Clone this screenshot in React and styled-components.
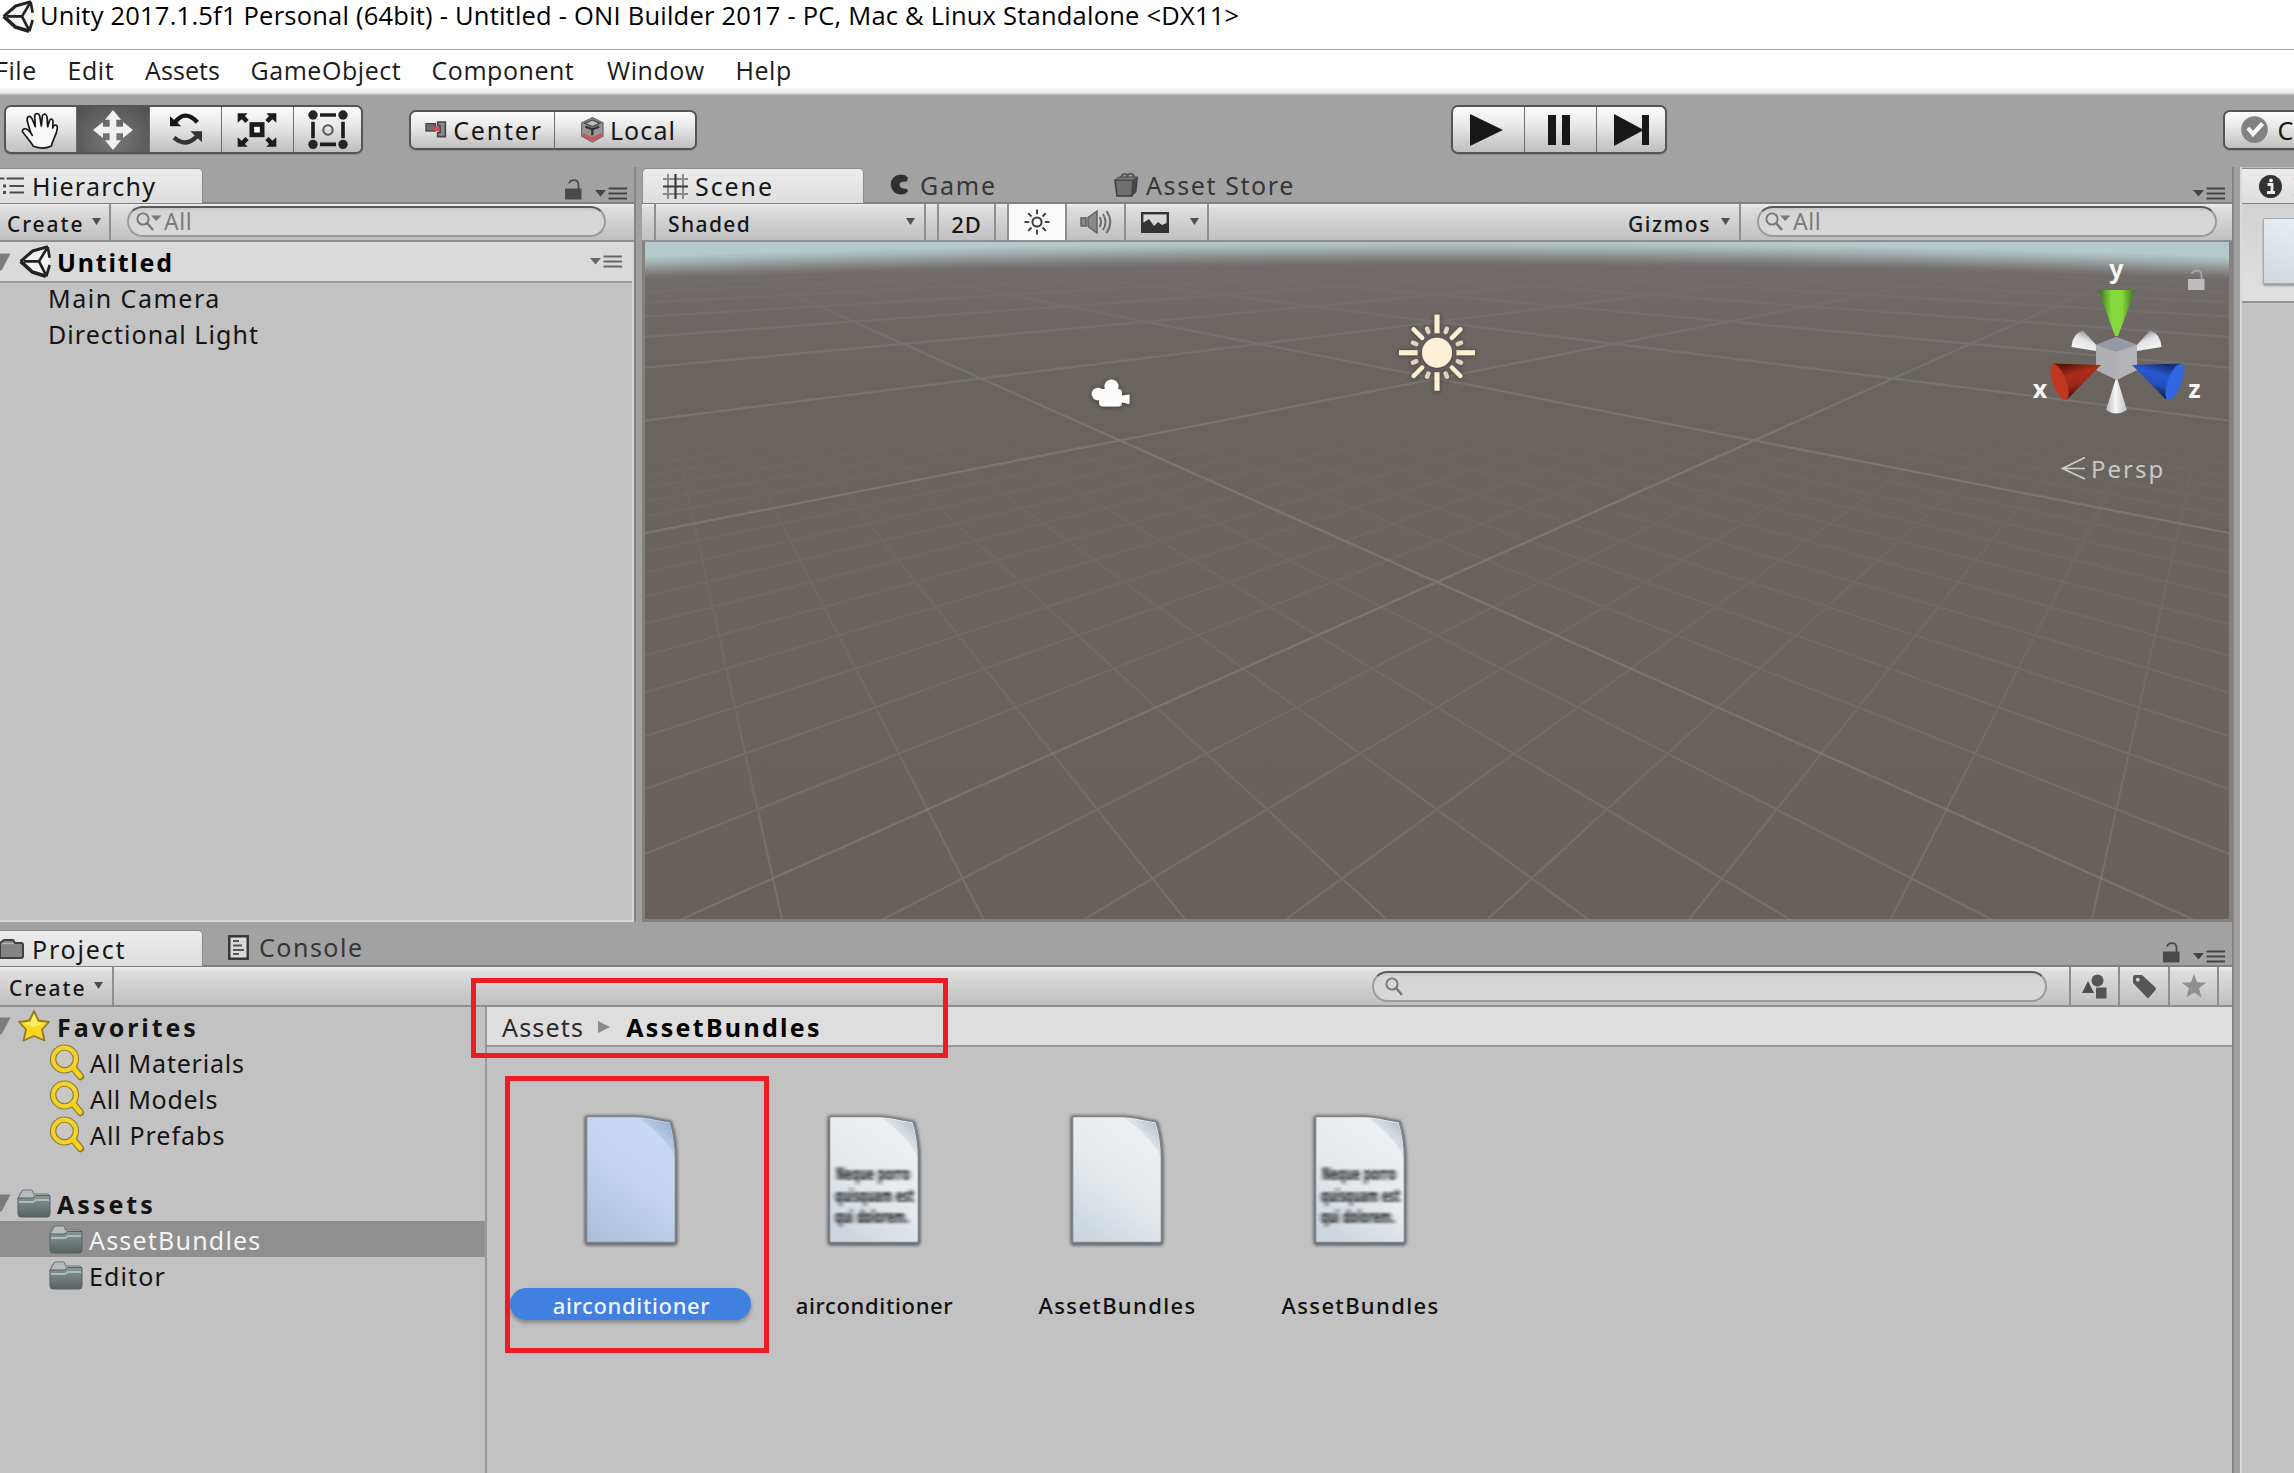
import React from 'react';
import styled, { createGlobalStyle, css } from 'styled-components';

const Global = createGlobalStyle`
  html, body { margin: 0; padding: 0; overflow: hidden; background: #a2a2a2; }
  * { box-sizing: border-box; }
  svg { display: block; flex: none; overflow: visible; }
`;

/* ---------- shared parts ---------- */

const Window = styled.div`
  position: relative;
  width: 2294px;
  height: 1473px;
  overflow: hidden;
  display: flex;
  flex-direction: column;
  background: #a2a2a2;
  font-family: 'Noto Sans', 'Open Sans', sans-serif;
  color: #161616;
`;

const Text = styled.span`
  flex: none;
  white-space: pre;
  font-size: ${(p) => p.$size || 25}px;
  font-weight: ${(p) => p.$weight || 400};
  letter-spacing: ${(p) => p.$track || 0}px;
  color: ${(p) => p.$color || 'inherit'};
`;

const Spacer = styled.div`
  flex: ${(p) => (p.$w ? 'none' : '1')};
  width: ${(p) => (p.$w ? `${p.$w}px` : 'auto')};
`;

const Column = styled.div`
  display: flex;
  flex-direction: column;
  flex: ${(p) => (p.$w ? 'none' : '1')};
  width: ${(p) => (p.$w ? `${p.$w}px` : 'auto')};
  min-width: 0;
`;

/* ---------- title and menu ---------- */

const TitleBar = styled.header`
  flex: none;
  display: flex;
  height: 50px;
  padding-left: 2px;
  gap: 6px;
  background: #fff;
  border-bottom: 1px solid #a9a9a9;
  font-family: 'Open Sans', 'Noto Sans', sans-serif;
  line-height: 30px;
  color: #000;
`;

const MenuBar = styled.nav`
  flex: none;
  display: grid;
  grid-template-columns: 72.5px 77.5px 105.5px 181px 175.5px 128.5px auto;
  height: 45px;
  background: linear-gradient(#fff 38px, #f0f0f0 39px, #ededed 43px, #bdbdbd 44px);
  font-family: 'Open Sans', 'Noto Sans', sans-serif;
  line-height: 41px;
  color: #1b1b1b;
  & > * { margin-left: -5px; }
`;

/* ---------- main toolbar ---------- */

const MainToolbar = styled.div`
  flex: none;
  display: flex;
  align-items: center;
  height: 72px;
  padding: 0 0 3px 4px;
`;

const ButtonGroup = styled.div`
  flex: none;
  display: flex;
  height: ${(p) => p.$h}px;
  border: 2px solid #545454;
  border-radius: 7px;
  overflow: hidden;
  box-shadow: 0 1px 1px rgba(0, 0, 0, 0.15);
`;

const GroupButton = styled.div`
  display: flex;
  align-items: center;
  justify-content: center;
  gap: ${(p) => p.$gap || 0}px;
  width: ${(p) => p.$w}px;
  padding-left: ${(p) => p.$pad || 0}px;
  padding-right: ${(p) => p.$end || 0}px;
  background: ${(p) =>
    p.$on
      ? 'radial-gradient(ellipse at 50% 70%, #7a7a7a, #4e4e4e)'
      : 'linear-gradient(#fbfbfb, #e9e9e9 40%, #c0bebe)'};
  & + & { border-left: 1.5px solid #6e6e6e; }
`;

/* ---------- docked panels ---------- */

const TabStrip = styled.div`
  flex: none;
  display: flex;
  height: ${(p) => p.$h || 37}px;
  align-items: flex-end;
  border-bottom: 2px solid #808080;
`;

const Tab = styled.div`
  display: flex;
  align-items: center;
  gap: ${(p) => p.$gap || 8}px;
  width: ${(p) => p.$w}px;
  height: 100%;
  padding-left: ${(p) => p.$pad || 0}px;
  color: ${(p) => (p.$active ? '#161616' : '#363636')};
  ${(p) =>
    p.$active &&
    css`
      background: linear-gradient(#ececec, #dedede);
      border: 1px solid #8c8c8c;
      border-left-width: ${p.$flush ? 0 : 1}px;
      border-bottom: 0;
      border-radius: ${p.$flush ? '0 5px 0 0' : '5px 5px 0 0'};
      margin-bottom: -1px;
    `}
`;

const StripTools = styled.div`
  display: flex;
  align-items: flex-end;
  gap: 13px;
  padding: 0 7px 2px 0;
`;

const Toolbar = styled.div`
  flex: none;
  display: flex;
  height: ${(p) => p.$h || 38}px;
  background: linear-gradient(#eeeeee, #dedede 12%, #c0c0c0);
  border-bottom: 2px solid #8e8e8e;
`;

const Cell = styled.div`
  flex: none;
  display: flex;
  align-items: center;
  gap: ${(p) => p.$gap || 0}px;
  width: ${(p) => p.$w}px;
  padding-left: ${(p) => p.$pad || 0}px;
  justify-content: ${(p) => (p.$center ? 'center' : 'flex-start')};
  border-right: 2px solid #8f8f8f;
  background: ${(p) => (p.$on ? '#fafafa' : 'transparent')};
  & > span { padding-top: 3px; }
`;

const SearchField = styled.div`
  flex: none;
  display: flex;
  align-items: center;
  width: ${(p) => p.$w}px;
  height: 31px;
  margin-top: ${(p) => p.$top || 2}px;
  padding: 0 0 1px ${(p) => p.$pad || 7}px;
  gap: 2px;
  border: 2px solid #9b9b9b;
  border-top-color: #5a5a5a;
  border-radius: 16px;
  background: linear-gradient(#c6c6c6, #d6d6d6 15%, #d8d8d8);
`;

const HierarchyBody = styled.div`
  flex: 1;
  background: #c2c2c2;
  border-right: 2px solid #d8d8d8;
  border-bottom: 2px solid #d8d8d8;
`;

const SceneHeading = styled.div`
  display: flex;
  align-items: center;
  height: 41px;
  background: #dadada;
  border-bottom: 2px solid #9a9a9a;
  padding-right: 10px;
`;

const Item = styled.div`
  display: flex;
  align-items: center;
  height: 36px;
  padding-left: ${(p) => p.$indent}px;
  gap: ${(p) => p.$gap || 0}px;
  margin-top: ${(p) => p.$above || 0}px;
  background: ${(p) => (p.$selected ? '#8f8f8f' : 'transparent')};
  color: ${(p) => (p.$selected ? '#f4f4f4' : '#141414')};
  & > span { padding-top: ${(p) => p.$drop || 0}px; }
`;

const Viewport = styled.div`
  flex: 1;
  border: 3px solid #85817c;
  border-top: 0;
  overflow: hidden;
`;

const VGutter = styled.div`
  flex: none;
  width: ${(p) => p.$w}px;
  background: #a0a0a0;
  border-left: 2px solid #858585;
`;

const Inspector = styled.aside`
  flex: 1;
  display: flex;
  flex-direction: column;
  min-width: 0;
  overflow: hidden;
  background: #c2c2c2;
  border-left: 2px solid #dadada;
`;

const InspectorHead = styled.div`
  flex: none;
  height: 99px;
  padding: 14px 0 0 21px;
  background: linear-gradient(#d2d2d2, #e0e0e0);
  border-bottom: 2px solid #939393;
`;

const PreviewSheet = styled.div`
  width: 60px;
  height: 66px;
  border: 1.5px solid #a3a8ac;
  border-radius: 2px;
  background: linear-gradient(200deg, #edf1f4, #cfd8e0);
  box-shadow: 0 2px 2px rgba(0, 0, 0, 0.3);
`;

const TopDock = styled.div`
  flex: none;
  display: flex;
  height: 755px;
  margin-bottom: 7px;
`;

const Workspace = styled.div`
  flex: 1;
  display: flex;
  min-height: 0;
`;

/* ---------- project ---------- */

const ProjectBody = styled.div`
  display: flex;
  flex: 1;
`;

const Tree = styled.div`
  flex: none;
  width: 487px;
  padding-top: 1px;
  background: #c2c2c2;
  border-right: 2px solid #989898;
`;

const Crumbs = styled.div`
  flex: none;
  display: flex;
  align-items: center;
  height: 40px;
  padding: 2px 0 0 15px;
  background: #dedede;
  border-bottom: 2px solid #9a9a9a;
`;

const Tiles = styled.div`
  flex: 1;
  display: grid;
  grid-template-columns: repeat(4, 243px);
  align-content: start;
  padding: 66px 0 0 22px;
  background: #c2c2c2;
`;

const Tile = styled.div`
  display: flex;
  flex-direction: column;
  align-items: center;
  gap: 43px;
`;

const TileLabel = styled.div`
  width: 241px;
  height: 32px;
  padding-left: 2px;
  line-height: 35px;
  text-align: center;
  border-radius: 16px;
  background: ${(p) => (p.$selected ? '#3f80e0' : 'transparent')};
  color: ${(p) => (p.$selected ? '#f2f6ff' : '#101010')};
  box-shadow: ${(p) => (p.$selected ? '0 3px 4px rgba(0,0,0,0.3)' : 'none')};
`;

const Highlight = styled.div`
  position: absolute;
  left: ${(p) => p.$x}px;
  top: ${(p) => p.$y}px;
  width: ${(p) => p.$w}px;
  height: ${(p) => p.$h}px;
  border: 5px solid #ed1c24;
  pointer-events: none;
`;

/* ---------- icons ---------- */

const UnityLogo = () => (
  <svg width="32" height="33" viewBox="57 462 96 99">
    <path d="M62 511 L98 480 L142 468 L150 511 L139 556 L97 543 Z" fill="#f4f4f4" />
    <g fill="none" stroke="#222" strokeLinejoin="round">
      <path d="M62 511 L98 480 L144 467" strokeWidth="9" />
      <path d="M62 511 L97 543 L138 556" strokeWidth="11" />
      <path d="M143 468 L149 500 M149 522 L139 556" strokeWidth="8" />
      <path d="M72 511 H117 M117 511 L140 473 M117 511 L137 550" strokeWidth="8" />
    </g>
  </svg>
);

const HandIcon = () => (
  <svg width="40" height="40" viewBox="60 58 120 120">
    <path
      d="M100 167 C90 150 76 136 67 122 C68 112 80 110 92 126 L82 92 C79 76 90 72 96 84 L106 108 L104 76 C106 66 116 66 119 76 L124 106 L127 76 C131 66 141 70 141 80 L143 108 L149 88 C155 82 160 86 159 96 L158 112 C162 100 172 100 172 112 C170 136 160 140 154 166 Q128 178 100 167 Z"
      fill="#f8f8f8" stroke="#161616" strokeWidth="5" strokeLinejoin="round"
    />
    <path d="M92 126 L98 136" stroke="#161616" strokeWidth="5" />
  </svg>
);

const MoveIcon = () => (
  <svg width="40" height="40" viewBox="278 57 120 120">
    <path
      d="M338 57 L362 86 H348 V107 H368 V93 L398 117 L368 141 V127 H348 V148 H362 L338 177 L314 148 H328 V127 H308 V141 L278 117 L308 93 V107 H328 V86 H314 Z"
      fill="#f1f1f1"
    />
  </svg>
);

const RotateIcon = () => (
  <svg width="40" height="40" viewBox="498 57 120 120">
    <g fill="none" stroke="#161616" strokeWidth="13">
      <path d="M525 94 Q555 54 592 94" />
      <path d="M592 134 Q560 172 522 140" stroke="#333" />
    </g>
    <path d="M510 76 V106 H544 Z" fill="#161616" />
    <path d="M571 121 H606 V154 Z" fill="#333" />
  </svg>
);

const ScaleIcon = () => (
  <svg width="40" height="40" viewBox="710 57 120 120">
    <rect x="754.5" y="100.5" width="31" height="31" fill="#fff" stroke="#1c1c1c" strokeWidth="14" />
    <path
      d="M712 67 H742 L734 75 L745 87 L735 96 L724 85 L712 95 Z M828 67 H798 L806 75 L795 87 L805 96 L816 85 L828 95 Z M712 167 H742 L734 159 L745 147 L735 138 L724 149 L712 139 Z M828 167 H798 L806 159 L795 147 L805 138 L816 149 L828 139 Z"
      fill="#1c1c1c"
    />
  </svg>
);

const RectIcon = () => (
  <svg width="40" height="40" viewBox="926 57 120 120">
    <path d="M962 72 H1010 M962 160 H1010 M941 92 V142 M1031 92 V142" stroke="#1e1e1e" strokeWidth="11" />
    {[941, 1031].map((x) => [72, 160].map((y) => <circle key={`${x}-${y}`} cx={x} cy={y} r="14" fill="#262626" />))}
    <circle cx="986" cy="117" r="14" fill="none" stroke="#555" strokeWidth="6" />
  </svg>
);

const CenterIcon = () => (
  <svg width="21" height="17" viewBox="79 63 63 51">
    <rect x="82" y="71" width="28" height="22" fill="#6e6e6e" stroke="#444" strokeWidth="4" />
    <path d="M117 66 H140 V110 H117 V98 H124 V78 H117 Z" fill="#8a8a8a" stroke="#444" strokeWidth="5" />
    <circle cx="114" cy="86" r="8" fill="#e0474f" />
  </svg>
);

const LocalIcon = () => (
  <svg width="23" height="26" viewBox="545 45 69 78">
    <path d="M579 47 L611 63 V102 L579 120 L547 102 V63 Z" fill="#969696" stroke="#6f6f6f" strokeWidth="4" />
    <path d="M579 82 V100 M558 74 L579 82 L600 74" stroke="#333" strokeWidth="7" fill="none" />
    <path d="M556 64 L579 54 L602 64 L579 74 Z" fill="#bdbdbd" stroke="#4a4a4a" strokeWidth="4" />
    <path d="M551 97 L579 112 L607 97" stroke="#df4a55" strokeWidth="9" fill="none" />
  </svg>
);

const LockIcon = ({ color = '#4a4a4a' }) => (
  <svg width="17" height="21" viewBox="0 0 17 21">
    <rect x="0" y="9.5" width="16.5" height="11" fill={color} />
    <path d="M4 4.5 Q5 1.2 9 1.2 Q13.5 1.2 13.5 6 V10" fill="none" stroke={color} strokeWidth="1.7" />
  </svg>
);

const PaneMenuIcon = ({ color = '#444' }) => (
  <svg width="32" height="13" viewBox="0 0 32 13">
    <path d="M0 3 H11 L5.5 9.5 Z" fill={color} />
    <path d="M13.5 1.5 H32 M13.5 6.5 H32 M13.5 11.5 H32" stroke={color} strokeWidth="2.2" />
  </svg>
);

const CaretShape = styled.svg`
  margin-bottom: 2px;
`;

const Caret = () => (
  <CaretShape width="9" height="7" viewBox="0 0 9 7">
    <path d="M0 0 H9 L4.5 7 Z" fill="#505050" />
  </CaretShape>
);

const Twisty = () => (
  <svg width="11" height="18" viewBox="0 0 11 18">
    <path d="M0 0.5 H10.5 L1.5 17.5 H0 Z" fill="#7c7c7c" />
  </svg>
);

const SearchIcon = ({ menu, color = '#777' }) => (
  <svg width={menu ? 26 : 18} height="19" viewBox={menu ? '0 0 26 19' : '0 0 18 19'}>
    <circle cx="7" cy="7" r="5.6" fill="none" stroke={color} strokeWidth="1.9" />
    <path d="M11 11 L17 18" stroke={color} strokeWidth="2.4" />
    {menu && <path d="M15 3.5 H25.5 L20.2 9 Z" fill={color} />}
  </svg>
);

const HierarchyIcon = () => (
  <svg width="25" height="18" viewBox="0 0 25 18">
    <g stroke="#4c4c4c" strokeWidth="2">
      <path d="M0 1.5 H4.5 M6.5 1.5 H24 M9.5 9 H24 M9.5 15.5 H24" />
      <path d="M3 9 H6 M3 15.5 H6" strokeWidth="3" />
    </g>
  </svg>
);

const GridIcon = () => (
  <svg width="25" height="25" viewBox="0 0 25 25">
    <path d="M5 0 V25 M20 0 V25 M0 5 H25 M0 20 H25" stroke="#8a8a8a" strokeWidth="2" />
    <path d="M12.5 0 V25 M0 12.5 H25" stroke="#3c3c3c" strokeWidth="2.2" />
  </svg>
);

const GameIcon = () => (
  <svg width="20" height="21" viewBox="0 0 20 21">
    <path d="M18 3.6 A10 10 0 1 0 18 17.4 L17 15 Q9 14.5 9.5 10.5 Q9 7.5 17 7.5 Z" fill="#303030" />
  </svg>
);

const StoreIcon = () => (
  <svg width="25" height="25" viewBox="0 0 25 25">
    <path d="M7 7 Q7 2 11 2 Q14 2 14 7 M13 5 Q14 1 18 2 Q20 3 20 7" fill="none" stroke="#5a5a5a" strokeWidth="2" />
    <path d="M1 8 H19 L18 24 H3 Z" fill="#6f6f6f" stroke="#3f3f3f" strokeWidth="1.6" />
    <path d="M19 8 L24 5 L22.5 20 L18 24 Z" fill="#454545" />
    <path d="M1 8 L5 5 H24 L19 8 Z" fill="#7a7a7a" stroke="#484848" strokeWidth="1" />
  </svg>
);

const SunIcon = () => (
  <svg width="26" height="26" viewBox="-13 -13 26 26">
    <circle r="4.6" fill="none" stroke="#3c3c3c" strokeWidth="2" />
    {[0, 45, 90, 135, 180, 225, 270, 315].map((a) => (
      <path key={a} d="M0 -7.8 V-12.5" transform={`rotate(${a})`} stroke="#3c3c3c" strokeWidth="1.9" />
    ))}
  </svg>
);

const SpeakerIcon = () => (
  <svg width="32" height="26" viewBox="0 0 32 26">
    <path d="M1 9 H6 V17 H1 Z M8 8.5 L17 2 V24 L8 17.5 Z" fill="#8a8a8a" stroke="#5c5c5c" strokeWidth="1.4" />
    <path d="M19.5 8 Q22.5 13 19.5 18 M23 5 Q28 13 23 21 M26.5 2 Q34 13 26.5 24" fill="none" stroke="#6c6c6c" strokeWidth="2" />
  </svg>
);

const PictureIcon = () => (
  <svg width="28" height="21" viewBox="0 0 28 21">
    <rect x="1.2" y="1.2" width="25.6" height="18.6" fill="#d8d8d8" stroke="#333" strokeWidth="2.4" />
    <path d="M2 11 L8 7 L13 14 L17 10 L21 13 L26 11 V19 H2 Z" fill="#333" />
  </svg>
);

const ProjectIcon = () => (
  <svg width="24" height="20" viewBox="0 0 24 20">
    <path d="M0 4 L4 1 H13 L15 4 H21 Q23 4 23 6 V17 Q23 19 21 19 H0 Z" fill="#858585" stroke="#3f3f3f" strokeWidth="2" />
    <path d="M2 4.5 H14" stroke="#b5b5b5" strokeWidth="1.4" />
  </svg>
);

const ConsoleIcon = () => (
  <svg width="21" height="25" viewBox="0 0 21 25">
    <rect x="1.3" y="1.3" width="18.4" height="22.4" fill="#d9d9d9" stroke="#333" strokeWidth="2.4" />
    <path d="M5 6 H11 M5 10.5 H14 M5 15 H16 M5 19 H11" stroke="#555" strokeWidth="1.8" />
  </svg>
);

const StarIcon = () => (
  <svg width="34" height="34" viewBox="0 0 34 34">
    <path d="M17 2 L21.5 11.5 L32 13 L25 20.5 L27.5 31.5 L17 27 L6.5 31.5 L9 20.5 L2 13 L12.5 11.5 Z" fill="#fbd720" stroke="#8f7a2c" strokeWidth="1.8" strokeLinejoin="round" />
    <path d="M17 5 L20.5 13 L27 14.5 L17 18 L7 14.5 L13.5 13 Z" fill="#fdec6a" />
  </svg>
);

const FilterIcon = () => (
  <svg width="35" height="35" viewBox="0 0 35 35">
    <path d="M24.5 23 L31.5 31.5" stroke="#8d7c34" strokeWidth="7.4" strokeLinecap="round" />
    <circle cx="15.5" cy="14" r="11.4" fill="#c9c9c2" stroke="#8d7c34" strokeWidth="6.4" />
    <circle cx="15.5" cy="14" r="11.4" fill="none" stroke="#f4d22c" strokeWidth="4.2" />
    <path d="M24 22.5 L31 31" stroke="#f6d21c" strokeWidth="5" strokeLinecap="round" />
  </svg>
);

const FolderIcon = () => (
  <svg width="34" height="29" viewBox="0 0 34 29">
    <defs>
      <linearGradient id="fold" x1="0" y1="0" x2="0" y2="1">
        <stop offset="0" stopColor="#8b9697" />
        <stop offset="1" stopColor="#566162" />
      </linearGradient>
    </defs>
    <path d="M1.5 8 L5 2 Q5.5 1 7 1 H14 Q16 1 16.5 5 H30 Q32 5 32.5 8 V10 H1.5 Z" fill="#b8bebf" stroke="#6d7778" strokeWidth="1.2" />
    <path d="M1 9 H16 L18 6.5 H33 V25 Q33 28 30 28 H4 Q1 28 1 25 Z" fill="url(#fold)" stroke="#566061" strokeWidth="1" />
    <path d="M2 13 H16 L19 11 H32" fill="none" stroke="#a9bcc0" strokeWidth="1.8" />
  </svg>
);

const ShapesIcon = () => (
  <svg width="25" height="25" viewBox="0 0 25 25">
    <circle cx="15.5" cy="6.5" r="6" fill="#555" />
    <path d="M6 7 L12 19 H0 Z" fill="#4c4c4c" />
    <rect x="14" y="13.5" width="10.5" height="11" fill="#555" />
  </svg>
);

const TagIcon = () => (
  <svg width="25" height="25" viewBox="0 0 25 25">
    <path d="M1 3 Q1 1 3 1 L10 1 L23.5 13.5 Q24.5 15 23.5 16 L17 23.5 Q16 24.5 15 23.5 L1 9 Z" fill="#565656" />
    <circle cx="5.8" cy="5.8" r="2" fill="#d0d0d0" />
  </svg>
);

const SaveStarIcon = () => (
  <svg width="24" height="24" viewBox="0 0 24 24">
    <path d="M12 0 L15 8.3 L24 8.8 L17 14.2 L19.5 23.5 L12 18.4 L4.5 23.5 L7 14.2 L0 8.8 L9 8.3 Z" fill="#909090" />
  </svg>
);

const PlayIcon = () => (
  <svg width="34" height="32" viewBox="0 0 34 32">
    <path d="M1 0 L34 16 L1 32 Z" fill="#181818" />
  </svg>
);

const PauseIcon = () => (
  <svg width="22" height="30" viewBox="0 0 22 30">
    <path d="M0 0 H8 V30 H0 Z M14 0 H22 V30 H14 Z" fill="#181818" />
  </svg>
);

const StepIcon = () => (
  <svg width="35" height="32" viewBox="0 0 35 32">
    <path d="M0 0 L28 15 V1 H35 V31 H28 V17 L0 32 Z" fill="#181818" />
  </svg>
);

const CheckIcon = () => (
  <svg width="27" height="27" viewBox="0 0 27 27">
    <circle cx="13.5" cy="13.5" r="13.3" fill="#828282" />
    <path d="M7 12 L12 18 L21.5 7.5" fill="none" stroke="#fafafa" strokeWidth="4.2" />
  </svg>
);

const InfoIcon = () => (
  <svg width="23" height="23" viewBox="0 0 23 23">
    <circle cx="11.5" cy="11.5" r="11.5" fill="#333" />
    <path d="M8.5 9.5 H13 V17 M8 17.5 H16" fill="none" stroke="#eee" strokeWidth="2.8" />
    <circle cx="12" cy="5.4" r="1.9" fill="#eee" />
  </svg>
);

const CrumbArrow = () => (
  <svg width="12" height="12" viewBox="0 0 12 12">
    <path d="M0 0 L12 6 L0 12 Z" fill="#8c8c8c" />
  </svg>
);

const DocumentIcon = ({ id, tint, text }) => {
  const [top, mid, low, fold] = tint === 'blue'
    ? ['#c9d8f2', '#c3d3ee', '#adbfdb', '#94a9cd']
    : ['#eef1f4', '#e6eaed', '#cbd5df', '#aebac5'];
  const outline = 'M4 3.5 H52 C66 3.5 74 7.5 86 8.5 C90 20 91.5 32 91.5 46 V127.5 Q91.5 129.5 89.5 129.5 H4 Q2.5 129.5 2.5 127.5 V5 Q2.5 3.5 4 3.5 Z';
  return (
    <svg width="94" height="132" viewBox="0 0 94 132">
      <defs>
        <linearGradient id={`${id}-bg`} x1="0.7" y1="0" x2="0.2" y2="1">
          <stop offset="0" stopColor={top} />
          <stop offset="0.5" stopColor={mid} />
          <stop offset="1" stopColor={low} />
        </linearGradient>
        <linearGradient id={`${id}-fold`} x1="1" y1="0" x2="0.42" y2="0.6">
          <stop offset="0.1" stopColor={fold} />
          <stop offset="1" stopColor={fold} stopOpacity="0" />
        </linearGradient>
        <filter id={`${id}-soft`} x="-20%" y="-20%" width="140%" height="140%">
          <feGaussianBlur stdDeviation="1.4" />
        </filter>
        <filter id={`${id}-smear`} x="-20%" y="-20%" width="140%" height="140%">
          <feGaussianBlur stdDeviation="1.9 1.3" />
        </filter>
      </defs>
      <path d={outline} fill="#777" stroke="#64686b" strokeWidth="4.5" filter={`url(#${id}-soft)`} transform="translate(0 1)" />
      <path d={outline} fill={`url(#${id}-bg)`} stroke="#7f8488" strokeWidth="1.6" />
      <path d="M54 5 C66 6 76 9 85 10 C89 22 90.5 32 90.5 44 C84 28 68 14 54 5 Z" fill={`url(#${id}-fold)`} />
      {text && (
        <g filter={`url(#${id}-smear)`} fontFamily="DejaVu Sans, sans-serif" fontWeight="700" fontSize="17" fill="#1c1c1c">
          <text x="9" y="67" textLength="74" lengthAdjust="spacingAndGlyphs">Neque porro</text>
          <text x="8" y="88.5" textLength="79" lengthAdjust="spacingAndGlyphs">quisquam est</text>
          <text x="8" y="110" textLength="74" lengthAdjust="spacingAndGlyphs">qui dolorem.</text>
        </g>
      )}
    </svg>
  );
};

/* ---------- scene view ---------- */

const HORIZON = 220.5;
const CENTRE = 1437;

const project = (m, n) => {
  const depth = 1 / (0.002766 + 0.00178 * n);
  return [CENTRE + 1.442 * m * depth, HORIZON + depth];
};

const gridLine = (c, from, to, mirror) => {
  const [x1, y1] = project((from + c) * mirror, from);
  const [x2, y2] = project((to + c) * mirror, to);
  return `M${x1.toFixed(1)} ${y1.toFixed(1)} L${x2.toFixed(1)} ${y2.toFixed(1)}`;
};

const range = (from, to, step) => {
  const out = [];
  for (let i = 0; from + i * step <= to + 1e-6; i += 1) out.push(from + i * step);
  return out;
};

const linesFor = (cs, far) =>
  cs.flatMap((c) => [gridLine(c, -1, far, 1), gridLine(c, -1, far, -1)]).join(' ');

const MAJOR = linesFor(range(-40, 40, 2), 26);
const MINOR = linesFor(range(-8, 8, 0.2).filter((c) => Math.abs(c / 2 - Math.round(c / 2)) > 0.01), 2.6);

const LightGizmo = () => (
  <g transform="translate(1437 352.7)" filter="url(#gizmo-shadow)" stroke="#fdefd2" strokeLinecap="round">
    <circle r="15" fill="#fdefd5" stroke="none" />
    {[0, 90, 180, 270].map((a) => (
      <path key={a} d="M0 -19.5 V-38" strokeWidth="5" strokeLinecap="butt" transform={`rotate(${a})`} />
    ))}
    {[45, 135, 225, 315].map((a) => (
      <path key={a} d="M0 -21 V-33" strokeWidth="4.4" transform={`rotate(${a})`} />
    ))}
    {[22.5, 67.5, 112.5, 157.5, 202.5, 247.5, 292.5, 337.5].map((a) => (
      <path key={a} d="M0 -22.5 V-26" strokeWidth="4.4" opacity="0.8" transform={`rotate(${a})`} />
    ))}
  </g>
);

const CameraGizmo = () => (
  <g fill="#fcfcfc" filter="url(#gizmo-shadow)">
    <circle cx="1098" cy="394" r="6.3" />
    <circle cx="1111.5" cy="386.5" r="7" />
    <rect x="1099" y="389" width="23" height="17.5" rx="4" />
    <path d="M1120 396 L1129.5 394.5 V404 L1120 402 Z" />
  </g>
);

const AxisGizmo = () => (
  <g>
    <path d="M2116 378 L2106 410 Q2116 417 2127 410 L2117 378 Z" fill="url(#cone-white)" />
    <path d="M2098 347 L2083 330.5 Q2072 334 2071.5 347 L2096 351 Z" fill="url(#cone-side)" />
    <path d="M2135 347 L2150 330.5 Q2161 334 2161.5 347 L2137 351 Z" fill="url(#cone-side-r)" />
    <path d="M2116.5 337 L2137 345 V370 L2116.5 380 L2096 370 V345 Z" fill="#b0b0b4" />
    <path d="M2116.5 337 L2137 345 L2116.5 352 L2096 345 Z" fill="#959aa5" />
    <path d="M2116.5 352 L2137 345 V370 L2116.5 380 Z" fill="#b4b4b7" />
    <path d="M2098.5 290 H2135 L2118 336 H2115 Z" fill="url(#cone-green)" />
    <path d="M2101 365 L2053 363.5 L2067 399.5 Z" fill="url(#cone-red)" />
    <ellipse cx="2059.5" cy="382" rx="6.8" ry="19" transform="rotate(-20 2059.5 382)" fill="#c2371f" />
    <path d="M2132 365 L2181 363.5 L2166 399.5 Z" fill="url(#cone-blue)" />
    <ellipse cx="2174.5" cy="382" rx="6.8" ry="19" transform="rotate(20 2174.5 382)" fill="#3166e2" />
    <g fontFamily="Noto Sans, sans-serif" fill="#f7f7f7" textAnchor="middle" fontWeight="700">
      <text x="2116.5" y="278" fontSize="25">y</text>
      <text x="2040" y="398" fontSize="25">x</text>
      <text x="2194.5" y="398" fontSize="25">z</text>
    </g>
    <path d="M2085 457.5 L2062.5 468.5 L2085 479 M2062.5 468.5 H2085" fill="none" stroke="#cfcdcb" strokeWidth="1.7" />
    <text x="2091" y="478" fontFamily="Noto Sans, sans-serif" fontSize="24" letterSpacing="2" fill="#c9c7c5">Persp</text>
    <g transform="translate(2188 269.5)">
      <rect y="9.5" width="16.5" height="11" fill="#bcbcbc" />
      <path d="M3.5 4.5 Q5 1.2 9 1.2 Q13.5 1.2 13.5 6 V10" fill="none" stroke="#a9a9a9" strokeWidth="1.7" />
    </g>
  </g>
);

const SceneCanvas = () => (
  <svg width="1587" height="677" viewBox="645 242 1587 677">
    <defs>
      <linearGradient id="ground" gradientUnits="userSpaceOnUse" x1="0" y1="262" x2="0" y2="919">
        <stop offset="0" stopColor="#716b6a" />
        <stop offset="0.2" stopColor="#6a645f" />
        <stop offset="1" stopColor="#68605b" />
      </linearGradient>
      <radialGradient id="sky" gradientUnits="userSpaceOnUse" cx="1437" cy="22266" r="22024">
        <stop offset="0.99885" stopColor="#716c6b" stopOpacity="0" />
        <stop offset="0.9992" stopColor="#80807f" stopOpacity="0.9" />
        <stop offset="0.9997" stopColor="#a2b1b1" />
        <stop offset="1" stopColor="#b4c9c9" />
      </radialGradient>
      <linearGradient id="major" gradientUnits="userSpaceOnUse" x1="0" y1="262" x2="0" y2="919">
        <stop offset="0" stopColor="#8c8c8c" stopOpacity="0" />
        <stop offset="0.12" stopColor="#8c8c8c" stopOpacity="0.28" />
        <stop offset="0.3" stopColor="#8c8c8c" stopOpacity="0.48" />
        <stop offset="1" stopColor="#8c8c8c" stopOpacity="0.42" />
      </linearGradient>
      <linearGradient id="minor" gradientUnits="userSpaceOnUse" x1="0" y1="375" x2="0" y2="919">
        <stop offset="0" stopColor="#858585" stopOpacity="0" />
        <stop offset="0.45" stopColor="#858585" stopOpacity="0.22" />
        <stop offset="1" stopColor="#8a8a8a" stopOpacity="0.4" />
      </linearGradient>
      <linearGradient id="cone-green">
        <stop offset="0" stopColor="#3d6a1c" />
        <stop offset="0.35" stopColor="#84d93c" />
        <stop offset="0.65" stopColor="#84d93c" />
        <stop offset="1" stopColor="#3d6a1c" />
      </linearGradient>
      <linearGradient id="cone-red" x1="0.4" y1="0" x2="0.75" y2="0.9">
        <stop offset="0" stopColor="#5c160c" />
        <stop offset="0.3" stopColor="#ad2d1a" />
        <stop offset="0.6" stopColor="#9c2817" />
        <stop offset="1" stopColor="#1d0603" />
      </linearGradient>
      <linearGradient id="cone-blue" x1="0.6" y1="0" x2="0.25" y2="0.9">
        <stop offset="0" stopColor="#162f73" />
        <stop offset="0.3" stopColor="#2857cf" />
        <stop offset="0.6" stopColor="#2450bd" />
        <stop offset="1" stopColor="#050c20" />
      </linearGradient>
      <linearGradient id="cone-white">
        <stop offset="0" stopColor="#b2b2b8" />
        <stop offset="0.45" stopColor="#f7f7f8" />
        <stop offset="1" stopColor="#bcbcc2" />
      </linearGradient>
      <linearGradient id="cone-side" x1="0.2" y1="1" x2="0.7" y2="0.1">
        <stop offset="0" stopColor="#f7f7f8" />
        <stop offset="0.6" stopColor="#e4e4e8" />
        <stop offset="1" stopColor="#8a8b92" />
      </linearGradient>
      <linearGradient id="cone-side-r" x1="0.8" y1="1" x2="0.3" y2="0.1">
        <stop offset="0" stopColor="#f7f7f8" />
        <stop offset="0.6" stopColor="#e4e4e8" />
        <stop offset="1" stopColor="#8a8b92" />
      </linearGradient>
      <filter id="gizmo-shadow" x="-30%" y="-30%" width="160%" height="160%">
        <feDropShadow dx="0" dy="0.5" stdDeviation="2" floodColor="#222" floodOpacity="0.75" />
      </filter>
    </defs>
    <rect x="645" y="242" width="1587" height="677" fill="url(#ground)" />
    <path d={MINOR} stroke="url(#minor)" strokeWidth="2" fill="none" />
    <path d={MAJOR} stroke="url(#major)" strokeWidth="2.2" fill="none" />
    <rect x="645" y="242" width="1587" height="60" fill="url(#sky)" />
    <CameraGizmo />
    <LightGizmo />
    <AxisGizmo />
  </svg>
);

/* ---------- panels ---------- */

const CreateCell = ({ w, pad }) => (
  <Cell $w={w} $pad={pad} $gap={8}>
    <Text $size={21} $weight={500} $track={1.9}>Create</Text>
    <Caret />
  </Cell>
);

const HierarchyPanel = () => (
  <Column $w={634}>
    <TabStrip>
      <Tab $active $flush $w={203} $gap={7}>
        <HierarchyIcon />
        <Text $track={1.25}>Hierarchy</Text>
      </Tab>
      <Spacer />
      <StripTools>
        <LockIcon />
        <PaneMenuIcon />
      </StripTools>
    </TabStrip>
    <Toolbar>
      <CreateCell w={111} pad={7} />
      <Spacer $w={16} />
      <SearchField $w={479}>
        <SearchIcon menu />
        <Text $size={23} $track={0.5} $color="#7b7b7b">All</Text>
      </SearchField>
    </Toolbar>
    <HierarchyBody>
      <SceneHeading>
        <Twisty />
        <Spacer $w={8} />
        <UnityLogo />
        <Spacer $w={6} />
        <Text $weight={700} $track={1.8} $color="#000">Untitled</Text>
        <Spacer />
        <PaneMenuIcon color="#666" />
      </SceneHeading>
      <Item $indent={48} $above={-3}><Text $track={1.5}>Main Camera</Text></Item>
      <Item $indent={48}><Text $track={1.06}>Directional Light</Text></Item>
    </HierarchyBody>
  </Column>
);

const ScenePanel = () => (
  <Column>
    <TabStrip>
      <Tab $active $w={222} $pad={20} $gap={7}>
        <GridIcon />
        <Text $track={1.9}>Scene</Text>
      </Tab>
      <Tab $w={222} $pad={26} $gap={10}>
        <GameIcon />
        <Text $track={1.8}>Game</Text>
      </Tab>
      <Tab $w={300} $pad={28} $gap={7}>
        <StoreIcon />
        <Text $track={1.6}>Asset Store</Text>
      </Tab>
      <Spacer />
      <StripTools>
        <PaneMenuIcon />
      </StripTools>
    </TabStrip>
    <Toolbar>
      <Cell $w={14} />
      <Cell $w={270} $pad={12}>
        <Text $size={21} $weight={500} $track={1.4}>Shaded</Text>
        <Spacer />
        <Caret />
        <Spacer $w={9} />
      </Cell>
      <Cell $w={13} />
      <Cell $w={57} $center><Text $size={22} $weight={500} $track={0.8}>2D</Text></Cell>
      <Cell $w={13} />
      <Cell $w={58} $center $on><SunIcon /></Cell>
      <Cell $w={59} $center><SpeakerIcon /></Cell>
      <Cell $w={83} $pad={15} $gap={21}><PictureIcon /><Caret /></Cell>
      <Spacer />
      <Cell $w={125} $pad={12} $gap={10}>
        <Text $size={21} $weight={500} $track={1.5}>Gizmos</Text>
        <Caret />
      </Cell>
      <Spacer $w={16} />
      <SearchField $w={460} $pad={6}>
        <SearchIcon menu />
        <Text $size={23} $track={0.5} $color="#7b7b7b">All</Text>
      </SearchField>
      <Spacer $w={15} />
    </Toolbar>
    <Viewport><SceneCanvas /></Viewport>
  </Column>
);

const TREE = [
  { label: 'Favorites', icon: StarIcon, root: true, track: 2.9 },
  { label: 'All Materials', icon: FilterIcon, track: 0.8 },
  { label: 'All Models', icon: FilterIcon, track: 0.7 },
  { label: 'All Prefabs', icon: FilterIcon, track: 1 },
  { label: 'Assets', icon: FolderIcon, root: true, track: 3, above: 33 },
  { label: 'AssetBundles', icon: FolderIcon, track: 1.2, selected: true },
  { label: 'Editor', icon: FolderIcon, track: 1.1 },
];

const FILES = [
  { name: 'airconditioner', tint: 'blue', selected: true, track: 0.65 },
  { name: 'airconditioner', text: true, track: 0.65 },
  { name: 'AssetBundles', track: 1.35 },
  { name: 'AssetBundles', text: true, track: 1.35 },
];

const ProjectPanel = () => (
  <>
    <TabStrip $h={38}>
      <Tab $active $flush $w={203} $gap={8}>
        <ProjectIcon />
        <Text $track={1.8}>Project</Text>
      </Tab>
      <Tab $w={200} $pad={25} $gap={10}>
        <ConsoleIcon />
        <Text $track={1.5}>Console</Text>
      </Tab>
      <Spacer />
      <StripTools>
        <LockIcon />
        <PaneMenuIcon />
      </StripTools>
    </TabStrip>
    <Toolbar $h={40}>
      <CreateCell w={114} pad={9} />
      <Spacer />
      <SearchField $w={675} $pad={11} $top={4}><SearchIcon /></SearchField>
      <Spacer $w={22} />
      <Cell $w={2} />
      <Cell $w={49} $center><ShapesIcon /></Cell>
      <Cell $w={50} $center><TagIcon /></Cell>
      <Cell $w={49} $center><SaveStarIcon /></Cell>
      <Spacer $w={13} />
    </Toolbar>
    <ProjectBody>
      <Tree>
        {TREE.map(({ label, icon: Icon, root, track, above, selected }) => (
          <Item key={label} $indent={root ? 0 : 49} $gap={root ? 6 : 6} $above={above} $selected={selected} $drop={2}>
            {root && <Twisty />}
            <Icon />
            <Text $weight={root ? 700 : 400} $track={track}>{label}</Text>
          </Item>
        ))}
      </Tree>
      <Column>
        <Crumbs>
          <Text $track={1.2} $color="#2b2b2b">Assets</Text>
          <Spacer $w={14} />
          <CrumbArrow />
          <Spacer $w={16} />
          <Text $weight={700} $track={2.3} $color="#000">AssetBundles</Text>
        </Crumbs>
        <Tiles>
          {FILES.map((f, i) => (
            <Tile key={i}>
              <DocumentIcon id={`doc${i}`} tint={f.tint} text={f.text} />
              <TileLabel $selected={f.selected}>
                <Text $size={22} $weight={500} $track={f.track}>{f.name}</Text>
              </TileLabel>
            </Tile>
          ))}
        </Tiles>
      </Column>
    </ProjectBody>
  </>
);

const TOOLS = [
  { icon: HandIcon, w: 70, end: 3 },
  { icon: MoveIcon, w: 73, on: true, end: 1 },
  { icon: RotateIcon, w: 72 },
  { icon: ScaleIcon, w: 72, end: 2 },
  { icon: RectIcon, w: 68 },
];

export default function App() {
  return (
    <Window>
      <Global />
      <TitleBar>
        <UnityLogo />
        <Text $size={25.5} $track={0.22}>
          {'Unity 2017.1.5f1 Personal (64bit) - Untitled - ONI Builder 2017 - PC, Mac & Linux Standalone <DX11>'}
        </Text>
      </TitleBar>
      <MenuBar>
        {['File', 'Edit', 'Assets', 'GameObject', 'Component', 'Window', 'Help'].map((m) => (
          <Text key={m} $track={m === 'Assets' ? 0.1 : 0.55}>{m}</Text>
        ))}
      </MenuBar>
      <MainToolbar>
        <ButtonGroup $h={49}>
          {TOOLS.map(({ icon: Icon, w, on, end }, i) => (
            <GroupButton key={i} $w={w} $on={on} $end={end}><Icon /></GroupButton>
          ))}
        </ButtonGroup>
        <Spacer $w={46} />
        <ButtonGroup $h={40}>
          <GroupButton $w={143} $gap={7} $pad={3}><CenterIcon /><Text $track={1.8}>Center</Text></GroupButton>
          <GroupButton $w={141} $gap={6} $pad={7}><LocalIcon /><Text $track={1.1}>Local</Text></GroupButton>
        </ButtonGroup>
        <Spacer $w={754} />
        <ButtonGroup $h={49}>
          <GroupButton $w={71} $end={5}><PlayIcon /></GroupButton>
          <GroupButton $w={72} $end={3}><PauseIcon /></GroupButton>
          <GroupButton $w={69}><StepIcon /></GroupButton>
        </ButtonGroup>
        <Spacer $w={556} />
        <ButtonGroup $h={40}>
          <GroupButton $w={151} $gap={9}><CheckIcon /><Text $track={1.5}>Collab</Text></GroupButton>
        </ButtonGroup>
      </MainToolbar>
      <Workspace>
        <Column $w={2232}>
          <TopDock>
            <HierarchyPanel />
            <VGutter $w={8} />
            <ScenePanel />
          </TopDock>
          <ProjectPanel />
        </Column>
        <VGutter $w={8} />
        <Inspector>
          <TabStrip>
            <Tab $active $flush $w={160} $pad={17} $gap={11}>
              <InfoIcon />
              <Text $track={1.5}>Inspector</Text>
            </Tab>
          </TabStrip>
          <InspectorHead>
            <PreviewSheet />
          </InspectorHead>
        </Inspector>
      </Workspace>
      <Highlight $x={471} $y={978} $w={477} $h={80} />
      <Highlight $x={505} $y={1076} $w={264} $h={277} />
    </Window>
  );
}
